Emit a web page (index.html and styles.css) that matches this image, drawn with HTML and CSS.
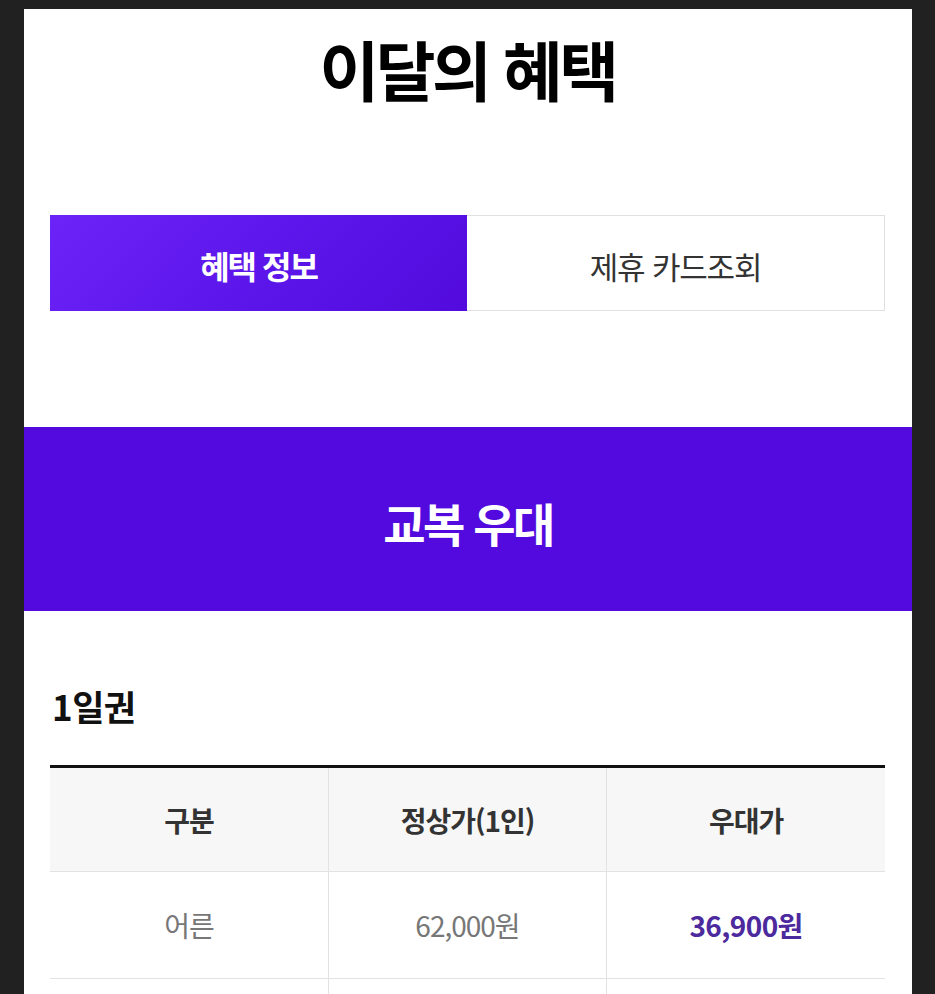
FILE: index.html
```html
<!DOCTYPE html>
<html lang="ko">
<head>
<meta charset="utf-8">
<title>이달의 혜택</title>
<link rel="stylesheet" href="styles.css">
</head>
<body>
<div class="panel">
  <div class="inner">
    <h1 class="title">이달의 혜택</h1>
    <div class="tabs">
      <div class="tab tab-active">혜택 정보</div>
      <div class="tab tab-idle">제휴 카드조회</div>
    </div>
  </div>
  <div class="banner">교복 우대</div>
  <div class="inner">
    <h2 class="subtitle">1일권</h2>
    <table class="price">
      <thead>
        <tr><th>구분</th><th>정상가(1인)</th><th>우대가</th></tr>
      </thead>
      <tbody>
        <tr><td>어른</td><td>62,000원</td><td class="sale">36,900원</td></tr>
        <tr class="next"><td></td><td></td><td></td></tr>
      </tbody>
    </table>
  </div>
</div>
</body>
</html>
```

FILE: styles.css
```css
html, body {
  margin: 0;
  padding: 0;
  background: #212121;
}
body {
  font-family: "Noto Sans CJK KR", "Noto Sans", sans-serif;
  overflow: hidden;
}
.panel {
  margin: 9px 23px 0 24px;
  background: #ffffff;
  min-height: 1100px;
}
.inner {
  padding: 0 27px 0 26px;
}
.title {
  margin: 0;
  padding-top: 27px;
  font-size: 65px;
  line-height: 65px;
  font-weight: 700;
  letter-spacing: -3.5px;
  text-align: center;
  color: #000;
}
.tabs {
  display: flex;
  margin-top: 114px;
  height: 96px;
}
.tab {
  flex: 1 1 0;
  display: flex;
  align-items: center;
  justify-content: center;
  box-sizing: border-box;
}
.tab-active {
  background: linear-gradient(135deg, #6c23f8 0%, #5a14e8 60%, #520bdc 100%);
  color: #fff;
  font-weight: 700;
  font-size: 32px;
  letter-spacing: -2px;
  padding-top: 4px;
}
.tab-idle {
  border: 1px solid #e0e0e0;
  border-left: none;
  color: #333;
  font-weight: 400;
  font-size: 31px;
  letter-spacing: -1.2px;
  padding-top: 4px;
}
.banner {
  margin-top: 116px;
  height: 184px;
  background: #530ade;
  color: #fff;
  display: flex;
  align-items: center;
  justify-content: center;
  font-size: 46px;
  font-weight: 700;
  letter-spacing: -2.5px;
  padding-top: 6px;
  box-sizing: border-box;
}
.subtitle {
  margin: 78px 0 0 0;
  font-size: 35px;
  line-height: 34px;
  font-weight: 700;
  letter-spacing: -0.5px;
  color: #111;
  padding-left: 2px;
}
.price {
  width: 100%;
  margin-top: 42px;
  border-collapse: collapse;
  border-top: 3px solid #111;
  table-layout: fixed;
}
.price th, .price td {
  border-right: 1px solid #e2e2e2;
  border-bottom: 1px solid #e2e2e2;
  text-align: center;
  padding: 0;
  letter-spacing: -1px;
}
.price th:last-child, .price td:last-child {
  border-right: none;
}
.price th {
  background: #f7f7f7;
  height: 103px;
  font-size: 28px;
  font-weight: 700;
  color: #333;
}
.price td {
  height: 106px;
  font-size: 28px;
  font-weight: 400;
  color: #777;
}
.price td.sale {
  color: #4c2a9e;
  font-weight: 700;
  letter-spacing: -0.6px;
}
.price tr.next td {
  height: 106px;
}
```
